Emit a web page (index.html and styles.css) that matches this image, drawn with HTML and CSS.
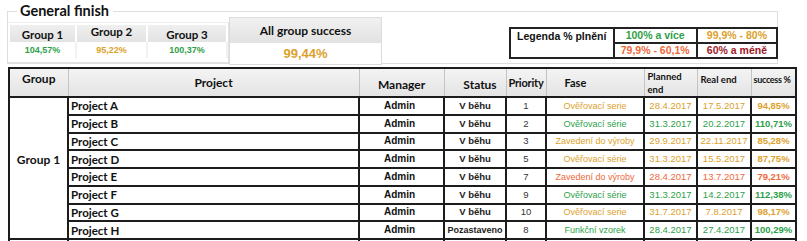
FILE: index.html
```html
<!DOCTYPE html>
<html lang="cs">
<head>
<meta charset="utf-8">
<title>General finish</title>
<link rel="stylesheet" href="styles.css">
</head>
<body>
<section class="finish">
  <h2 class="finish-title">General finish</h2>
  <div class="groups">
    <div class="groups-head">
      <div class="g g1">Group 1</div>
      <div class="g g2 up">Group 2</div>
      <div class="g g3">Group 3</div>
    </div>
    <div class="groups-vals">
      <div class="g g1 green">104,57%</div>
      <div class="g g2 gold">95,22%</div>
      <div class="g g3 green">100,37%</div>
    </div>
  </div>
  <div class="all">
    <div class="all-head">All group success</div>
    <div class="all-val gold">99,44%</div>
  </div>
  <table class="legend">
    <tr>
      <td class="legend-title" rowspan="2">Legenda % plnění</td>
      <td class="green">100% a více</td>
      <td class="gold">99,9% - 80%</td>
    </tr>
    <tr>
      <td class="orange">79,9% - 60,1%</td>
      <td class="red">60% a méně</td>
    </tr>
  </table>
</section>

<table class="main">
  <colgroup>
    <col class="c-group"><col class="c-project"><col class="c-manager"><col class="c-status"><col class="c-prio"><col class="c-fase"><col class="c-planned"><col class="c-real"><col class="c-success">
  </colgroup>
  <thead>
    <tr>
      <th class="h-top">Group</th>
      <th>Project</th>
      <th class="h-low">Manager</th>
      <th class="h-low h-status">Status</th>
      <th class="h-prio">Priority</th>
      <th class="h-fase">Fase</th>
      <th class="h-small">Planned<br>end</th>
      <th class="h-small h-real">Real end</th>
      <th class="h-small h-real h-succ">success %</th>
    </tr>
  </thead>
  <tbody>
    <tr>
      <td class="grp" rowspan="8">Group 1</td>
      <td class="proj">Project A</td><td class="mgr">Admin</td><td class="st">V běhu</td><td class="pr">1</td>
      <td class="gold">Ověřovací serie</td><td class="dt gold">28.4.2017</td><td class="dt gold">17.5.2017</td><td class="pct gold">94,85%</td>
    </tr>
    <tr>
      <td class="proj">Project B</td><td class="mgr">Admin</td><td class="st">V běhu</td><td class="pr">2</td>
      <td class="green">Ověřovací série</td><td class="dt green">31.3.2017</td><td class="dt green">20.2.2017</td><td class="pct green">110,71%</td>
    </tr>
    <tr>
      <td class="proj">Project C</td><td class="mgr">Admin</td><td class="st">V běhu</td><td class="pr">3</td>
      <td class="gold">Zavedení do výroby</td><td class="dt gold">29.9.2017</td><td class="dt gold">22.11.2017</td><td class="pct gold">85,28%</td>
    </tr>
    <tr>
      <td class="proj">Project D</td><td class="mgr">Admin</td><td class="st">V běhu</td><td class="pr">5</td>
      <td class="gold">Ověřovací série</td><td class="dt gold">31.3.2017</td><td class="dt gold">15.5.2017</td><td class="pct gold">87,75%</td>
    </tr>
    <tr>
      <td class="proj">Project E</td><td class="mgr">Admin</td><td class="st">V běhu</td><td class="pr">7</td>
      <td class="orange">Zavedení do výroby</td><td class="dt orange">28.4.2017</td><td class="dt orange">13.7.2017</td><td class="pct orange">79,21%</td>
    </tr>
    <tr>
      <td class="proj">Project F</td><td class="mgr">Admin</td><td class="st">V běhu</td><td class="pr">9</td>
      <td class="green">Ověřovací série</td><td class="dt green">31.3.2017</td><td class="dt green">14.2.2017</td><td class="pct green">112,38%</td>
    </tr>
    <tr>
      <td class="proj">Project G</td><td class="mgr">Admin</td><td class="st">V běhu</td><td class="pr">10</td>
      <td class="gold">Ověřovací serie</td><td class="dt gold">31.7.2017</td><td class="dt gold">7.8.2017</td><td class="pct gold">98,17%</td>
    </tr>
    <tr>
      <td class="proj">Project H</td><td class="mgr">Admin</td><td class="st st-long">Pozastaveno</td><td class="pr">8</td>
      <td class="green">Funkční vzorek</td><td class="dt green">28.4.2017</td><td class="dt green">27.4.2017</td><td class="pct green">100,29%</td>
    </tr>
    <tr class="next">
      <td></td><td></td><td></td><td></td><td></td><td></td><td></td><td></td><td></td>
    </tr>
  </tbody>
</table>
</body>
</html>
```

FILE: styles.css
```css
html, body {
  margin: 0;
  padding: 0;
  background: #fff;
  overflow: hidden;
}
body {
  padding-left: 8px;
  font-family: "Liberation Sans", Arial, sans-serif;
  color: #111;
}

.green { color: #2e9f4a; }
.gold { color: #dca12c; }
.orange { color: #f0683a; }
.red { color: #9e1a1f; }

/* ---------- top section ---------- */
.finish {
  position: relative;
  margin: 11px 0 0 -1px;
  width: 769px;
  height: 51px;
  border: 1px solid #dedede;
  display: flex;
  align-items: flex-start;
}
.finish-title {
  position: absolute;
  top: -10px;
  left: 9px;
  margin: 0;
  padding: 0 4px 0 3px;
  background: #fff;
  font-family: Lato, "Liberation Sans", sans-serif;
  font-weight: 700;
  font-size: 14.5px;
  line-height: 18px;
  color: #111;
}
.groups {
  margin-top: 10px;
  width: 218px;
  height: 37px;
  padding: 2px 0 0 2px;
  border-bottom: 1px solid #e2e2e2;
  border-right: 1px solid #e2e2e2;
  border-top: 1px solid #eeeeee;
}
.groups-head,
.groups-vals {
  display: flex;
}
.groups-head .g {
  height: 17px;
  line-height: 19px;
  background: linear-gradient(#efefef, #e3e3e3);
  border-right: 2px solid #fff;
  font-family: Lato, "Liberation Sans", sans-serif;
  font-weight: 700;
  font-size: 11.5px;
  text-align: center;
  color: #111;
}
.groups-head .g.up { line-height: 14px; }
.groups-vals .g {
  height: 16px;
  line-height: 16px;
  font-weight: 700;
  font-size: 9px;
  text-align: center;
  border-right: 2px solid #f2f2f2;
}
.g1 { width: 65px; }
.g2 { width: 69px; }
.g3 { width: 78px; }

.all {
  margin-top: 5px;
  width: 151px;
  height: 46px;
  border: 1px solid #dcdcdc;
  background: #fff;
}
.all-head {
  height: 25px;
  line-height: 25px;
  background: linear-gradient(#f1f1f1, #e2e2e2);
  font-family: Lato, "Liberation Sans", sans-serif;
  font-weight: 700;
  font-size: 12px;
  text-align: center;
  color: #111;
}
.all-val {
  height: 21px;
  line-height: 22px;
  font-weight: 700;
  font-size: 13px;
  text-align: center;
}

.legend {
  margin: 15px -1px 0 auto;
  width: 269px;
  border-collapse: collapse;
  border: 2px solid #222;
  font-weight: 700;
  font-size: 10.5px;
}
.legend tr { height: 15px; }
.legend td {
  border: 2px solid #222;
  padding: 0 4px;
  line-height: 11px;
  text-align: center;
  white-space: nowrap;
}
.legend td.legend-title {
  width: 96px;
  vertical-align: top;
  padding-top: 2px;
  color: #111;
}
.legend td:nth-child(2) { width: 76px; }

/* ---------- main table ---------- */
.main {
  margin-top: 3px;
  width: 787px;
  border-collapse: collapse;
  table-layout: fixed;
  border: 2px solid #1c1c1c;
}
.c-group { width: 59px; }
.c-project { width: 291px; }
.c-manager { width: 85px; }
.c-status { width: 62px; }
.c-prio { width: 40px; }
.c-fase { width: 98px; }
.c-planned { width: 53px; }
.c-real { width: 54px; }
.c-success { width: 45px; }

.main thead tr { height: 28px; }
.main th {
  padding: 0;
  background: linear-gradient(#f3f3f3, #e4e4e4);
  border-top: 2px solid #1c1c1c;
  border-bottom: 2px solid #1c1c1c;
  border-left: 1px solid #c4c4c4;
  border-right: 1px solid #c4c4c4;
  font-family: Lato, "Liberation Sans", sans-serif;
  font-weight: 700;
  font-size: 12px;
  color: #111;
  text-align: center;
  vertical-align: middle;
  line-height: 13px;
}
.main th:first-child { border-left: 2px solid #1c1c1c; }
.main th:last-child { border-right: 2px solid #1c1c1c; }
.main th.h-top { vertical-align: top; padding-top: 3px; }
.main th.h-low { padding-top: 3px; }
.main th.h-status { padding-left: 10px; }
.main th.h-prio { font-size: 11px; letter-spacing: -0.2px; }
.main th.h-fase { text-align: left; padding-left: 18px; font-size: 11px; }
.main th.h-small {
  text-align: left;
  vertical-align: top;
  padding: 1px 0 0 3px;
  font-size: 9.5px;
  line-height: 13px;
}
.main th.h-real { padding-top: 4px; white-space: nowrap; }
.main th.h-succ { padding-left: 2px; font-size: 9px; letter-spacing: -0.3px; }

.main tbody tr { height: 17.75px; }
.main td {
  padding: 0;
  border: 2px solid #1c1c1c;
  font-size: 9px;
  line-height: 12px;
  text-align: center;
  vertical-align: middle;
  white-space: nowrap;
  overflow: hidden;
}
.main td.grp {
  font-family: Lato, "Liberation Sans", sans-serif;
  font-weight: 700;
  font-size: 12px;
  padding-bottom: 16px;
}
.main td.proj {
  text-align: left;
  padding: 1px 0 0 2px;
  font-family: Lato, "Liberation Sans", sans-serif;
  font-weight: 700;
  font-size: 11.5px;
  color: #111;
}
.main td.mgr {
  font-weight: 700;
  font-size: 10px;
  color: #111;
  padding-right: 4px;
}
.main td.st {
  font-weight: 700;
  font-size: 9.5px;
  color: #222;
}
.main td.st-long { font-size: 9px; }
.main td.dt { font-size: 9.5px; }
.main td.pr { color: #333; font-size: 9.5px; }
.main td.pct { font-weight: 700; font-size: 9.5px; }
.main tr.next td { height: 20px; }
```
